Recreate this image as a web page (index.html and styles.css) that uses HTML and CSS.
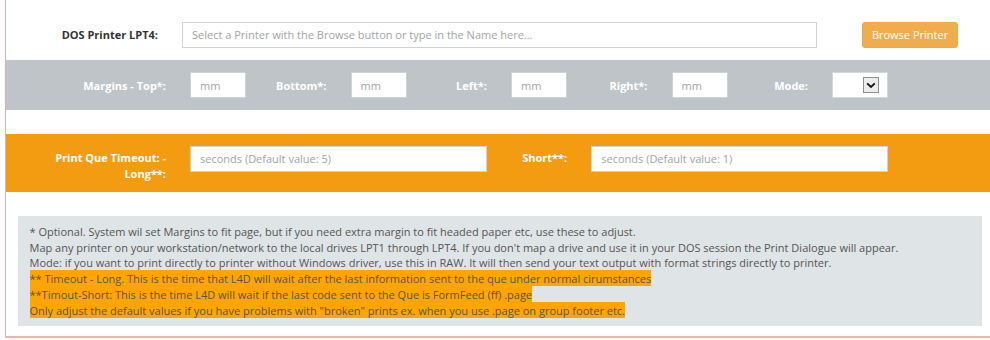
FILE: index.html
```html
<!DOCTYPE html>
<html>
<head>
<meta charset="utf-8">
<link rel="stylesheet" href="styles.css">
</head>
<body>
<div class="panel">
  <div class="printer-row">
    <label class="printer-label">DOS Printer LPT4:</label>
    <input class="field printer-input" type="text" placeholder="Select a Printer with the Browse button or type in the Name here...">
    <button class="browse-btn" type="button">Browse Printer</button>
  </div>

  <div class="band band-grey">
    <div class="grid">
      <label class="g-label c2">Margins - Top*:</label>
      <input class="field small c3" type="text" placeholder="mm">
      <label class="g-label c4">Bottom*:</label>
      <input class="field small c5" type="text" placeholder="mm">
      <label class="g-label c6">Left*:</label>
      <input class="field small c7" type="text" placeholder="mm">
      <label class="g-label c8">Right*:</label>
      <input class="field small c9" type="text" placeholder="mm">
      <label class="g-label c10">Mode:</label>
      <div class="fake-select c11">
        <span class="select-arrow">
          <svg width="10" height="7" viewBox="0 0 10 7"><path d="M1.2 1.3 L5 5 L8.8 1.3" fill="none" stroke="#111" stroke-width="1.8"/></svg>
        </span>
      </div>
    </div>
  </div>

  <div class="band band-orange">
    <div class="grid">
      <label class="o-label span-a">Print Que Timeout: - Long**:</label>
      <input class="field wide span-b" type="text" placeholder="seconds (Default value: 5)">
      <label class="o-label span-c">Short**:</label>
      <input class="field wide span-d" type="text" placeholder="seconds (Default value: 1)">
    </div>
  </div>

  <div class="note">
    <div class="line">* Optional. System wil set Margins to fit page, but if you need extra margin to fit headed paper etc, use these to adjust.</div>
    <div class="line">Map any printer on your workstation/network to the local drives LPT1 through LPT4. If you don't map a drive and use it in your DOS session the Print Dialogue will appear.</div>
    <div class="line">Mode: if you want to print directly to printer without Windows driver, use this in RAW. It will then send your text output with format strings directly to printer.</div>
    <div class="line"><span class="hl">** Timeout - Long. This is the time that L4D will wait after the last information sent to the que under normal cirumstances</span></div>
    <div class="line"><span class="hl">**Timout-Short: This is the time L4D will wait if the last code sent to the Que is FormFeed (ff) .page</span></div>
    <div class="line"><span class="hl">Only adjust the default values if you have problems with "broken" prints ex. when you use .page on group footer etc.</span></div>
  </div>
</div>
</body>
</html>
```

FILE: styles.css
```css
html, body {
  margin: 0;
  padding: 0;
  overflow: hidden;
  background: #ffffff;
}

body {
  font-family: "Open Sans", "Liberation Sans", sans-serif;
  font-size: 11px;
  color: #555555;
  width: 990px;
  height: 340px;
}

.panel {
  margin-left: 5px;
  width: 1000px;
  border-left: 1px solid #f2aba6;
  border-bottom: 2px solid #f4b4ae;
  padding: 21.5px 0 10px 0;
  box-sizing: border-box;
}

.field {
  font-family: "Open Sans", "Liberation Sans", sans-serif;
  font-size: 11px;
  height: 26px;
  box-sizing: border-box;
  border: 1px solid #cfd3d6;
  background: #ffffff;
  padding: 0 9px;
  margin: 0;
  color: #555;
  outline: none;
  border-radius: 0;
}

.field::placeholder {
  color: #a3a3a3;
  opacity: 1;
}

/* printer row */
.printer-row {
  display: flex;
  align-items: center;
  padding-left: 11.5px;
  height: 26px;
}

.printer-label {
  width: 140.5px;
  text-align: right;
  font-weight: 700;
  color: #333333;
  white-space: nowrap;
}

.printer-input {
  margin-left: 24px;
  width: 635px;
}

.browse-btn {
  margin-left: 45px;
  width: 96px;
  height: 26px;
  background: #f0ad4e;
  border: 1px solid #eea849;
  border-radius: 3px;
  color: #ffffff;
  font-family: "Open Sans", "Liberation Sans", sans-serif;
  font-size: 11px;
  padding: 0;
}

/* bands */
.band {
  padding-left: 11.5px;
}

.band-grey {
  margin-top: 12.5px;
  background: #bfc4c8;
  padding-top: 12px;
  padding-bottom: 11.5px;
}

.band-orange {
  margin-top: 24px;
  background: #f39c12;
  padding-top: 12px;
  padding-bottom: 11px;
}

.grid {
  display: grid;
  grid-template-columns: repeat(12, 80.25px);
  align-items: center;
}

.g-label {
  display: flex;
  justify-content: flex-end;
  padding: 0 12px;
  white-space: nowrap;
  font-weight: 700;
  color: #ffffff;
}

.small {
  margin: 0 12px;
  width: 56.25px;
}

.c2 { grid-column: 2; }
.c3 { grid-column: 3; }
.c4 { grid-column: 4; }
.c5 { grid-column: 5; }
.c6 { grid-column: 6; }
.c7 { grid-column: 7; }
.c8 { grid-column: 8; }
.c9 { grid-column: 9; }
.c10 { grid-column: 10; }
.c11 { grid-column: 11; }

.fake-select {
  margin: 0 12px;
  width: 56.25px;
  height: 26px;
  box-sizing: border-box;
  border: 1px solid #d4d8db;
  background: #ffffff;
  display: flex;
  justify-content: flex-end;
  align-items: center;
  padding-right: 8px;
}

.select-arrow {
  width: 16px;
  height: 16px;
  box-sizing: border-box;
  border: 1px solid #8f8f8f;
  background: #ececec;
  display: flex;
  align-items: center;
  justify-content: center;
}

.o-label {
  align-self: start;
  padding: 4.5px 12px 0 12px;
  text-align: right;
  font-weight: 700;
  color: #ffffff;
  line-height: 15.6px;
}

.span-a { grid-column: 1 / span 2; }
.span-b { grid-column: 3 / span 4; align-self: start; }
.span-c { grid-column: 7; }
.span-d { grid-column: 8 / span 4; align-self: start; }

.wide {
  margin: 0 12px;
  width: auto;
}

/* note */
.note {
  margin: 24px 0 0 11.5px;
  width: 964px;
  box-sizing: border-box;
  background: #dfe4e6;
  padding: 8px 12px;
  color: #555555;
  line-height: 15.6px;
}

.line {
  white-space: nowrap;
}

.hl {
  background: #ffa500;
  padding: 0.5px 0;
}
```
